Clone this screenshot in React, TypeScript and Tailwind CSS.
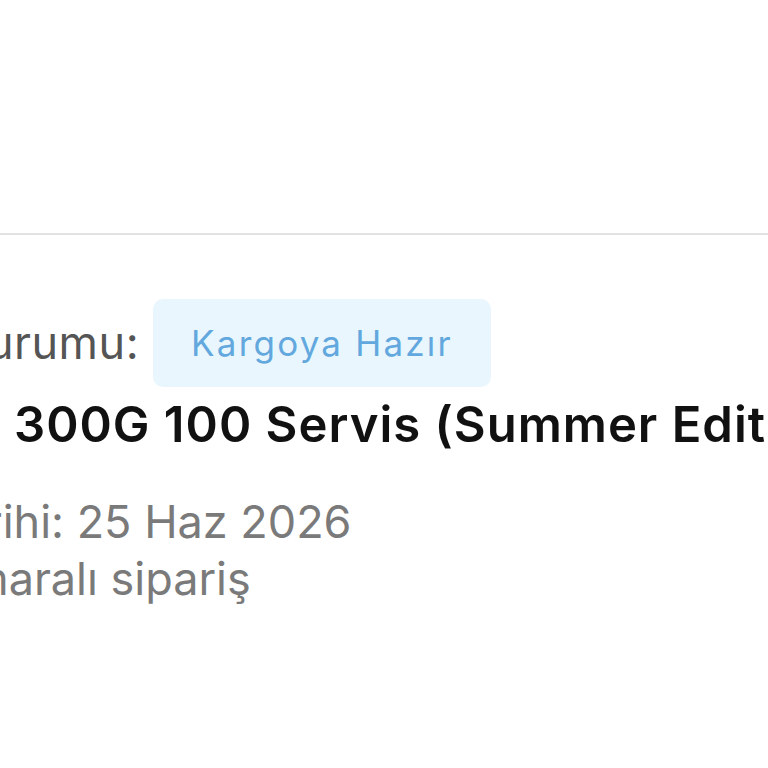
import clsx from 'clsx';

const font = '[font-family:Inter,"Noto_Sans",sans-serif]';

function InfoLine({
  children,
  shift,
  className,
}: {
  children: React.ReactNode;
  shift: string;
  className?: string;
}) {
  return (
    <div className={clsx('whitespace-nowrap', shift, className)}>{children}</div>
  );
}

export default function App() {
  return (
    <div
      className={clsx(
        'w-[768px] h-[768px] overflow-hidden bg-white flex flex-col',
        font
      )}
    >
      <div className="h-[233px] shrink-0" />
      <div className="h-[2px] bg-[#e2e2e2] shrink-0" />

      <div className="flex-1 bg-white pt-[64px]">
        <div className="flex items-center">
          <InfoLine
            shift="-ml-[208px]"
            className="text-[45px] text-[#555] tracking-[0.5px]"
          >
            Sipariş Durumu:
          </InfoLine>
          <span className="ml-[14px] h-[88px] px-[38px] flex items-center rounded-[10px] bg-[#e9f6fd] text-[35px] tracking-[2.2px] text-[#62a8de] whitespace-nowrap">
            Kargoya Hazır
          </span>
        </div>

        <InfoLine
          shift="ml-[14px]"
          className="mt-[8px] text-[49px] font-semibold text-[#111] leading-[60px] tracking-[1px]"
        >
          300G 100 Servis (Summer Edition)
        </InfoLine>

        <InfoLine
          shift="-ml-[224px]"
          className="mt-[40px] text-[45px] text-[#7a7a7a] leading-[54px]"
        >
          Sipariş Tarihi: 25 Haz 2026
        </InfoLine>

        <InfoLine
          shift="-ml-[255px]"
          className="text-[45px] text-[#7a7a7a] leading-[60px]"
        >
          482913 numaralı sipariş
        </InfoLine>
      </div>
    </div>
  );
}
